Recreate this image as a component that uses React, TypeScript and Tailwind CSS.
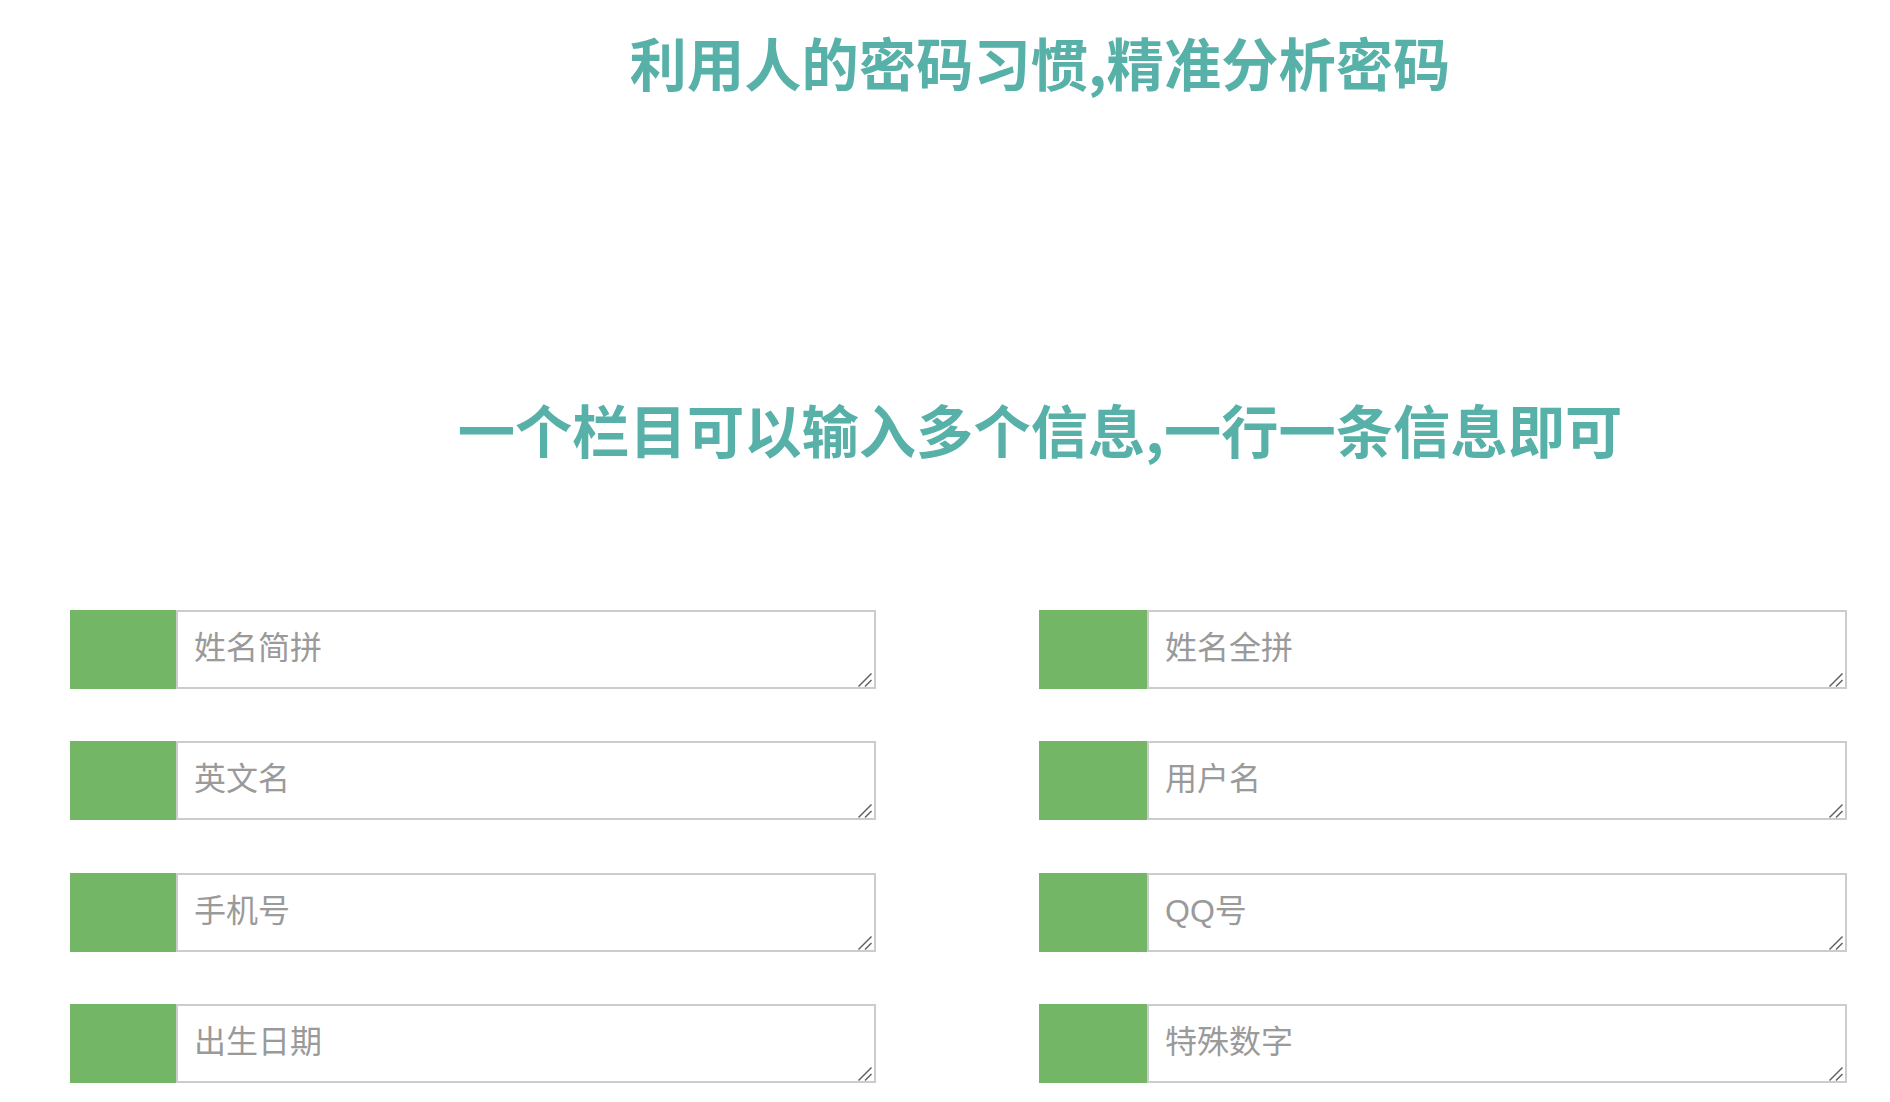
const fields = [
  ["姓名简拼", "姓名全拼"],
  ["英文名", "用户名"],
  ["手机号", "QQ号"],
  ["出生日期", "特殊数字"],
];

function Field({ placeholder, wide }: { placeholder: string; wide?: boolean }) {
  return (
    <div className={wide ? "flex h-[79px] w-[808px]" : "flex h-[79px] w-[806px]"}>
      <div className={wide ? "w-[108px] shrink-0 bg-[#73b665]" : "w-[106px] shrink-0 bg-[#73b665]"} />
      <div className="relative flex-1">
        <textarea
          placeholder={placeholder}
          className="block h-[79px] w-full resize-none border-2 border-[#cccccc] bg-white pl-4 pt-[12px] text-[32px] leading-[48px] text-[#555] outline-none placeholder:text-[#9a9a9a]"
          style={{ fontFamily: "'Liberation Sans', 'Noto Sans CJK SC', sans-serif" }}
        />
        {/* resize grip */}
        <svg
          className="pointer-events-none absolute bottom-[2px] right-[4px]"
          width="14"
          height="14"
          viewBox="0 0 14 14"
        >
          <path d="M0.5 13.5 L13.5 0.5" stroke="#5f5f5f" strokeWidth="1.4" />
          <path d="M7 13.5 L13.5 7" stroke="#5f5f5f" strokeWidth="1.4" />
        </svg>
      </div>
    </div>
  );
}

export default function App() {
  return (
    <div
      className="min-h-screen bg-white"
      style={{ fontFamily: "'Noto Sans CJK SC', 'Noto Sans', sans-serif" }}
    >
      <h1 className="pl-[190px] pt-[33px] text-center text-[57.3px] font-bold leading-none text-[#57b1a8]">
        利用人的密码习惯,精准分析密码
      </h1>

      <h2 className="mt-[310px] pl-[190px] text-center text-[57.3px] font-bold leading-none text-[#57b1a8]">
        一个栏目可以输入多个信息,一行一条信息即可
      </h2>

      <div className="mt-[152px] flex flex-col gap-[52.5px] pl-[70px]">
        {fields.map(([left, right]) => (
          <div key={left} className="flex gap-[163px]">
            <Field placeholder={left} />
            <Field placeholder={right} wide />
          </div>
        ))}
      </div>
    </div>
  );
}
